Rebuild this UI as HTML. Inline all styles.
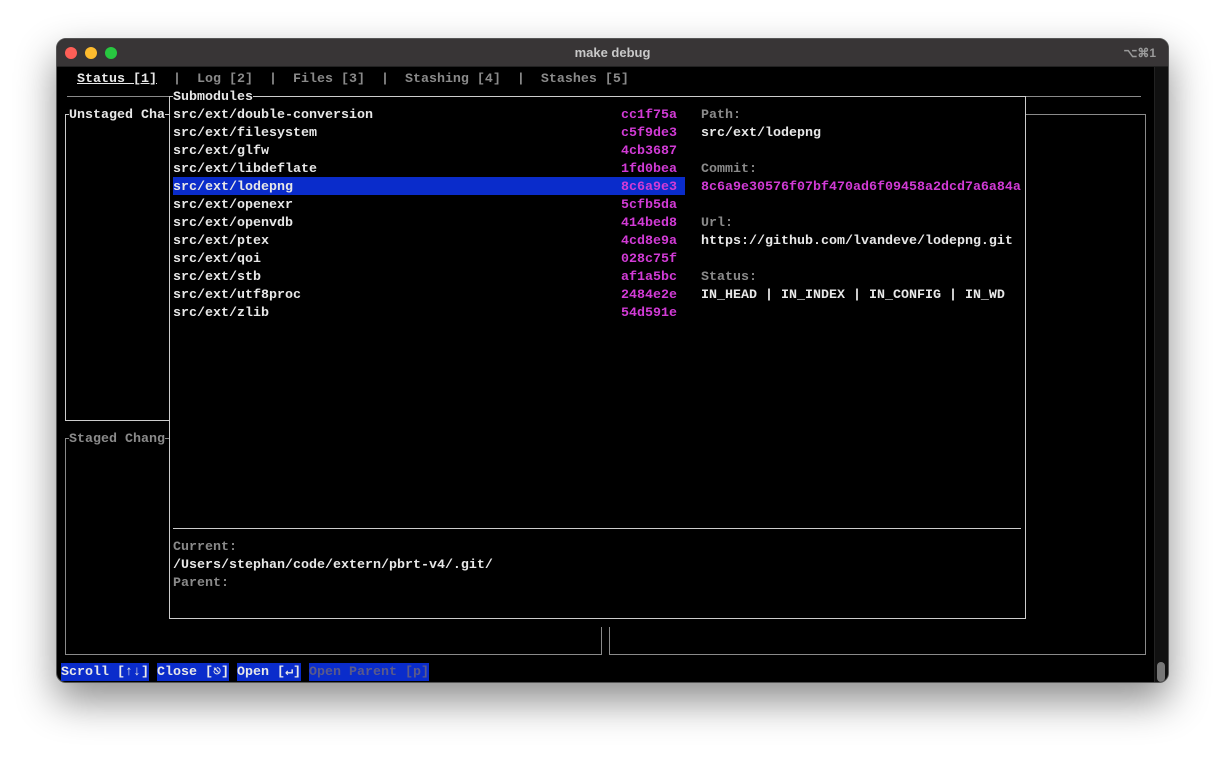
<!DOCTYPE html>
<html><head><meta charset="utf-8"><style>
*{margin:0;padding:0;box-sizing:border-box}
body{width:1225px;height:757px;background:#fff;position:relative;overflow:hidden;font-family:"Liberation Mono","DejaVu Sans Mono",monospace;font-weight:bold;font-size:13.33px}
.win{position:absolute;left:56px;top:38px;width:1113px;height:645px;border-radius:10px;background:#000;border:1px solid #555;overflow:hidden;box-shadow:0 18px 40px rgba(0,0,0,.45)}
.tb{position:absolute;left:0;top:0;width:100%;height:28px;background:#383536;border-bottom:1px solid #222}
.dot{position:absolute;top:8px;width:12px;height:12px;border-radius:50%}
.t{position:absolute;white-space:pre;line-height:18px;height:18px}
.l{position:absolute;background:#8a8a8a}
.w{color:#e8e8e8}.g{color:#8a8a8a}.m{color:#d23bd6}
.box{position:absolute;border:1px solid #8a8a8a}
</style></head><body>
<div class="win">
 <div class="tb">
  <div class="dot" style="left:8px;background:#fe5f57"></div>
  <div class="dot" style="left:28px;background:#febc2e"></div>
  <div class="dot" style="left:48px;background:#28c840"></div>
  <div class="t" style="left:0;width:1111px;text-align:center;top:5px;color:#c9c9c9;font-family:'Liberation Sans',sans-serif;font-size:13px">make debug</div>
  <div class="t" style="right:12px;top:5px;color:#9a9a9a;font-family:'Liberation Sans',sans-serif;font-size:12px">⌥⌘1</div>
 </div>
 <div style="position:absolute;right:0;top:28px;width:14px;height:617px;background:#111;border-left:1px solid #222"></div>
 <div style="position:absolute;right:3px;top:623px;width:8px;height:20px;border-radius:4px;background:#777"></div>
</div>
<div style="position:absolute;left:0;top:2px">
 <div class="t w" style="left:77px;top:69px;text-decoration:underline">Status [1]</div>
 <div class="t g" style="left:173px;top:69px">|  Log [2]  |  Files [3]  |  Stashing [4]  |  Stashes [5]</div>
</div>
<div class="l" style="left:67px;top:96px;width:1074px;height:1px"></div>
<div class="box" style="left:65px;top:114px;width:110px;height:307px;border-color:#ccc"></div>
<div class="box" style="left:65px;top:438px;width:537px;height:217px"></div>
<div class="box" style="left:609px;top:114px;width:537px;height:541px"></div>
<div style="position:absolute;left:597px;top:617px;width:16px;height:10px;background:#000"></div>
<div style="position:absolute;left:0;top:2px">
 <div class="t w" style="left:69px;top:105px;background:#000">Unstaged Cha</div>
 <div class="t g" style="left:69px;top:429px;background:#000">Staged Chang</div>
</div>
<div style="position:absolute;left:169px;top:96px;width:857px;height:523px;background:#000;border:1px solid #ccc"></div>
<div style="position:absolute;left:173px;top:177px;width:512px;height:18px;background:#0a2ccb"></div>
<div class="l" style="left:173px;top:528px;width:848px;height:1px;background:#ccc"></div>
<div style="position:absolute;left:0;top:2px">
 <div class="t w" style="left:173px;top:87px;background:#000">Submodules</div>
 <div class="t w" style="left:173px;top:105px;line-height:18px;height:auto">src/ext/double-conversion
src/ext/filesystem
src/ext/glfw
src/ext/libdeflate
src/ext/lodepng
src/ext/openexr
src/ext/openvdb
src/ext/ptex
src/ext/qoi
src/ext/stb
src/ext/utf8proc
src/ext/zlib</div>
 <div class="t m" style="left:621px;top:105px;height:auto">cc1f75a
c5f9de3
4cb3687
1fd0bea
8c6a9e3
5cfb5da
414bed8
4cd8e9a
028c75f
af1a5bc
2484e2e
54d591e</div>
 <div class="t g" style="left:701px;top:105px">Path:</div>
 <div class="t w" style="left:701px;top:123px">src/ext/lodepng</div>
 <div class="t g" style="left:701px;top:159px">Commit:</div>
 <div class="t m" style="left:701px;top:177px">8c6a9e30576f07bf470ad6f09458a2dcd7a6a84a</div>
 <div class="t g" style="left:701px;top:213px">Url:</div>
 <div class="t w" style="left:701px;top:231px">https://github.com/lvandeve/lodepng.git</div>
 <div class="t g" style="left:701px;top:267px">Status:</div>
 <div class="t w" style="left:701px;top:285px">IN_HEAD | IN_INDEX | IN_CONFIG | IN_WD</div>
 <div class="t g" style="left:173px;top:537px">Current:</div>
 <div class="t w" style="left:173px;top:555px">/Users/stephan/code/extern/pbrt-v4/.git/</div>
 <div class="t g" style="left:173px;top:573px">Parent:</div>
</div>
<div style="position:absolute;left:0;top:0">
 <div class="t w" style="left:61px;top:663px;background:#0a2ccb;line-height:20px">Scroll [↑↓]</div>
 <div class="t w" style="left:157px;top:663px;background:#0a2ccb;line-height:20px">Close [⎋]</div>
 <div class="t w" style="left:237px;top:663px;background:#0a2ccb;line-height:20px">Open [↵]</div>
 <div class="t" style="left:309px;top:663px;background:#0a2ccb;color:#5a5a8a;line-height:20px">Open Parent [p]</div>
</div>
</body></html>
